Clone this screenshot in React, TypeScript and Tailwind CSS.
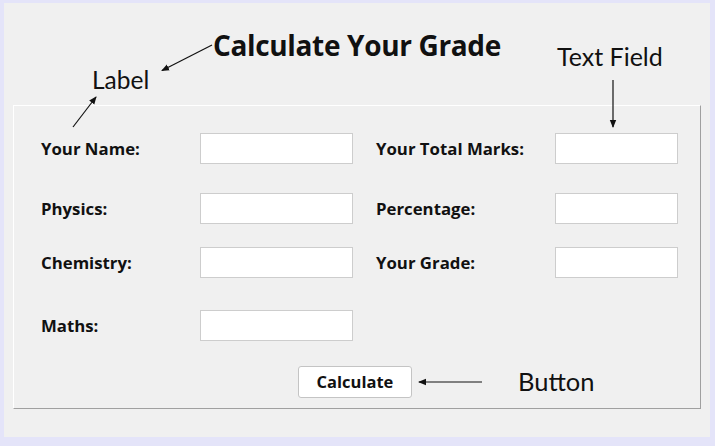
import React from "react";

const Field = ({ w }: { w: string }) => (
  <div className={`${w} h-[31px] bg-white border border-[#cdcdcd]`} />
);

export default function App() {
  const rows: { l: string; r?: string; mt: string }[] = [
    { l: "Your Name:", r: "Your Total Marks:", mt: "mt-0" },
    { l: "Physics:", r: "Percentage:", mt: "mt-[29px]" },
    { l: "Chemistry:", r: "Your Grade:", mt: "mt-[23px]" },
    { l: "Maths:", mt: "mt-[32px]" },
  ];
  return (
    <div className="relative w-[715px] h-[446px] bg-[#e4e4f9] pt-[3px] pl-[4px] pr-[5px] pb-[9px] font-['Lato',sans-serif] text-[#111]">
      <div className="h-full bg-[#f0f0f0] flex flex-col">
        <header className="h-[102px] pt-[28px] pl-[209px]">
          <h1 className="text-[28px] font-bold leading-none font-['Open_Sans',sans-serif] tracking-[-0.35px]">Calculate Your Grade</h1>
        </header>
        <section className="mx-[9px] h-[304px] border border-t-white border-l-white border-r-[#a0a0a0] border-b-[#a0a0a0] pt-[27px] pl-[27px] flex flex-col font-['Open_Sans',sans-serif]">
          {rows.map((row) => (
            <div key={row.l} className={`flex items-center h-[31px] ${row.mt}`}>
              <div className="w-[159px] text-[16.8px] font-bold">{row.l}</div>
              <Field w="w-[153px]" />
              {row.r && (
                <>
                  <div className="w-[23px]" />
                  <div className="w-[179px] text-[16.8px] font-bold">{row.r}</div>
                  <Field w="w-[123px]" />
                </>
              )}
            </div>
          ))}
          <div className="mt-[25px] pl-[257px]">
            <button className="w-[114px] h-[32px] bg-white border border-[#c4c4c4] rounded-[3px] text-[16.5px] font-bold">
              Calculate
            </button>
          </div>
        </section>
      </div>

      <span className="absolute left-[92px] top-[68px] text-[24.5px] leading-none">Label</span>
      <span className="absolute left-[557px] top-[44px] text-[25px] leading-none">Text Field</span>
      <span className="absolute left-[518px] top-[369px] text-[25.5px] leading-none">Button</span>

      <svg className="absolute inset-0 pointer-events-none" width="715" height="446" viewBox="0 0 715 446">
        <defs>
          <marker id="ah" markerWidth="8" markerHeight="8" refX="7" refY="4" orient="auto" markerUnits="userSpaceOnUse">
            <path d="M0,0.8 L8,4 L0,7.2 Z" fill="#111" />
          </marker>
        </defs>
        <g stroke="#111" strokeWidth="1.2" fill="none">
          <line x1="212" y1="45" x2="162" y2="70.5" markerEnd="url(#ah)" />
          <line x1="73" y1="127" x2="96" y2="97" markerEnd="url(#ah)" />
          <line x1="613" y1="80" x2="613" y2="127" markerEnd="url(#ah)" />
          <line x1="482" y1="382" x2="419" y2="382" markerEnd="url(#ah)" />
        </g>
      </svg>
    </div>
  );
}
